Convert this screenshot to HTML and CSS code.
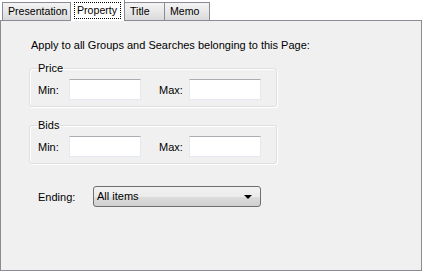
FILE: index.html
```html
<!DOCTYPE html>
<html lang="en">
<head>
    <meta charset="UTF-8">
    <title>Property</title>
    <link rel="stylesheet" href="styles.css">
</head>
<body>
    <div class="tabs">
        <div class="tab tab-presentation">Presentation</div>
        <div class="tab selected"><span class="focus">Property</span></div>
        <div class="tab tab-title">Title</div>
        <div class="tab tab-memo">Memo</div>
    </div>
    <div class="panel">
        <p class="intro">Apply to all Groups and Searches belonging to this Page:</p>

        <fieldset class="group">
            <legend>Price</legend>
            <div class="row">
                <label class="lbl-min">Min:</label>
                <input type="text" class="box">
                <label class="lbl-max">Max:</label>
                <input type="text" class="box">
            </div>
        </fieldset>

        <fieldset class="group">
            <legend>Bids</legend>
            <div class="row">
                <label class="lbl-min">Min:</label>
                <input type="text" class="box">
                <label class="lbl-max">Max:</label>
                <input type="text" class="box">
            </div>
        </fieldset>

        <div class="ending">
            <label class="lbl-ending">Ending:</label>
            <div class="combo">
                <span>All items</span>
                <span class="arrow"></span>
            </div>
        </div>
    </div>
</body>
</html>
```

FILE: styles.css
```css
body {
    margin: 0;
    background: #fff;
    font-family: "Liberation Sans", Arial, sans-serif;
    font-size: 11px;
    color: #000;
}
.tabs {
    display: flex;
    align-items: flex-end;
    height: 20px;
    padding-left: 2px;
    font-size: 10.6px;
}
.tab {
    height: 17px;
    line-height: 17px;
    box-sizing: content-box;
    padding-left: 5px;
    border: 1px solid #898c95;
    border-bottom: none;
    border-left: none;
    background: linear-gradient(#f3f3f3, #e8e8e8 50%, #dadada);
    white-space: nowrap;
    overflow: hidden;
}
.tab-presentation {
    width: 62px;
    padding-left: 5px;
    border-left: 1px solid #898c95;
}
.tab-title {
    width: 34px;
}
.tab-memo {
    width: 39px;
}
.tab.selected {
    position: relative;
    z-index: 1;
    width: 50px;
    height: 21px;
    margin-bottom: -1px;
    padding-left: 3px;
    border-left: none;
    background: #fff;
}
.focus {
    display: inline-block;
    width: 47px;
    line-height: 15px;
    padding-left: 2px;
    box-sizing: border-box;
    margin-top: 2px;
    border: 1px dotted #000;
}
.panel {
    height: 251px;
    box-sizing: border-box;
    border: 1px solid #898c95;
    background: #f0f0f0;
    padding: 0 0 0 28px;
}
.intro {
    margin: 0;
    padding: 18px 0 0 2px;
    line-height: 13px;
}
.group {
    width: 238px;
    margin: 10px 0 0 0;
    padding: 4px 0 6px 8px;
    border: 1px solid #dcdfe3;
    border-radius: 3px;
    box-shadow: inset 1px 1px 0 #fff, 1px 1px 0 #fff;
}
.group + .group {
    margin-top: 12px;
}
.group legend {
    padding: 0 1px 0 0;
    margin-left: 0;
    line-height: 13px;
}
.row {
    display: flex;
    align-items: center;
}
.lbl-min {
    width: 31px;
}
.lbl-max {
    width: 30px;
    margin-left: 18px;
}
.box {
    width: 72px;
    height: 21px;
    box-sizing: border-box;
    margin: 0;
    border: 1px solid #e3e9ef;
    border-top-color: #abadb3;
    background: #fff;
}
.ending {
    display: flex;
    align-items: center;
    margin: 22px 0 0 9px;
}
.lbl-ending {
    width: 55px;
}
.combo {
    position: relative;
    width: 168px;
    height: 21px;
    box-sizing: border-box;
    border: 1px solid #707070;
    border-radius: 3px;
    background: linear-gradient(#f2f2f2, #ebebeb 50%, #dddddd 51%, #cfcfcf);
    line-height: 19px;
    padding-left: 3px;
}
.arrow {
    position: absolute;
    right: 8px;
    top: 8px;
    border-left: 4px solid transparent;
    border-right: 4px solid transparent;
    border-top: 4px solid #000;
}
```
